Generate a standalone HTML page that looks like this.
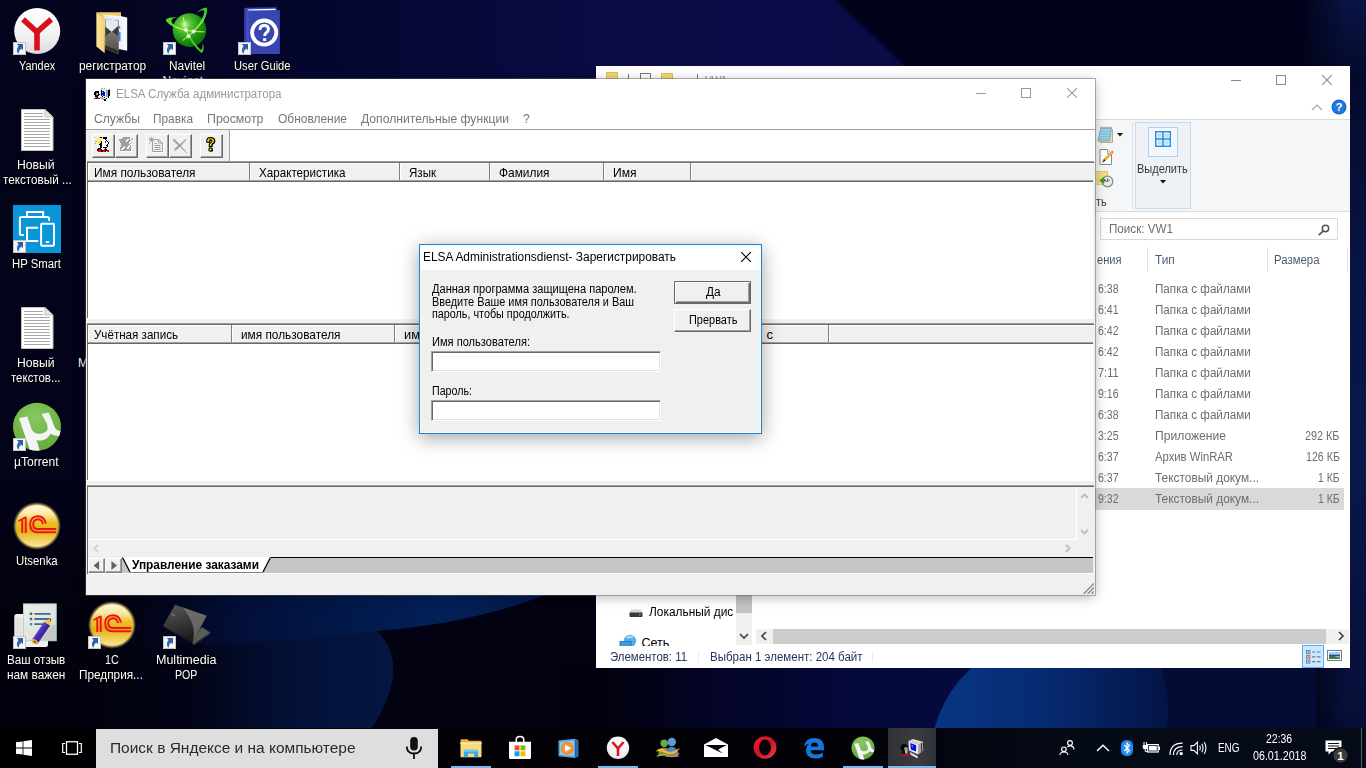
<!DOCTYPE html>
<html>
<head>
<meta charset="utf-8">
<title>Desktop</title>
<style>

*{box-sizing:border-box;margin:0;padding:0}
html,body{width:1366px;height:768px;overflow:hidden}
body{font-family:"Liberation Sans",sans-serif;font-size:12px;color:#000;background:#03031a;position:relative}
.abs{position:absolute}
.t{position:absolute;white-space:nowrap;line-height:1;transform-origin:0 0}
#wall{position:absolute;left:0;top:0;width:1366px;height:768px}
#exp{position:absolute;left:596px;top:66px;width:754px;height:602px;background:#fff;overflow:hidden}
#elsa{position:absolute;left:86px;top:79px;width:1009px;height:516px;background:#f0f0f0;box-shadow:0 0 0 1px rgba(90,90,90,.45),0 2px 11px rgba(0,0,0,.3)}
#dlg{position:absolute;left:419px;top:244px;width:343px;height:190px;background:#f0f0f0;border:1px solid #1883d7;box-shadow:inset 0 0 0 1px #fbf7f2,0 4px 18px rgba(0,0,0,.36)}
#tb{position:absolute;left:0;top:728px;width:1366px;height:40px;background:linear-gradient(90deg,#010104 0%,#020208 60%,#040a16 80%,#050b18 100%)}
.cbtn{position:absolute;width:10px;height:10px}
.tbtn{position:absolute;width:23px;height:24px;background:#f0f0f0;border:1px solid;border-color:#fff #696969 #696969 #fff;box-shadow:inset -1px -1px 0 #a0a0a0}
.hsep{position:absolute;width:2px;height:17px;background:linear-gradient(90deg,#808080 50%,#fff 50%)}

</style>
</head>
<body>
<svg id="wall" viewBox="0 0 1366 768">
<defs>
<linearGradient id="w0" x1="0" x2="0" y1="0" y2="1"><stop offset="0" stop-color="#03031a"/><stop offset=".6" stop-color="#03031a"/><stop offset=".8" stop-color="#02020f"/><stop offset="1" stop-color="#02020f"/></linearGradient>
<linearGradient id="w1" x1="0" x2="1" y1="0" y2="0"><stop offset="0" stop-color="#03031a"/><stop offset=".3" stop-color="#04052a"/><stop offset=".6" stop-color="#090a40"/><stop offset=".85" stop-color="#0d0c4a"/><stop offset="1" stop-color="#0a0a42"/></linearGradient>
<linearGradient id="w2" x1="0" x2="0" y1="0" y2="1"><stop offset="0" stop-color="#0a1444"/><stop offset=".1" stop-color="#050a2c"/><stop offset=".35" stop-color="#081444"/><stop offset=".6" stop-color="#09174a"/><stop offset="1" stop-color="#060d34"/></linearGradient>
<linearGradient id="w3" x1="0" x2="1" y1="0" y2="0"><stop offset="0" stop-color="#083684"/><stop offset=".5" stop-color="#062a70"/><stop offset="1" stop-color="#041446"/></linearGradient>
<linearGradient id="w4" x1="0" x2="1" y1="0" y2="0"><stop offset="0" stop-color="#02020f"/><stop offset=".3" stop-color="#02103a"/><stop offset=".75" stop-color="#032058"/><stop offset="1" stop-color="#021a4a"/></linearGradient>
<linearGradient id="w5" x1="0" x2="1" y1="0" y2="0"><stop offset="0" stop-color="#02020f"/><stop offset=".3" stop-color="#020416"/><stop offset=".7" stop-color="#04123a"/><stop offset="1" stop-color="#051640"/></linearGradient>
<linearGradient id="w6" x1="0" x2="1" y1="0" y2="0"><stop offset="0" stop-color="#02020f"/><stop offset=".06" stop-color="#02020f"/><stop offset=".2" stop-color="#030426"/><stop offset=".38" stop-color="#05083a"/><stop offset=".5" stop-color="#06093c"/><stop offset=".8" stop-color="#040c36"/><stop offset="1" stop-color="#040c34"/></linearGradient>
<linearGradient id="mrg" x1="0" x2="1" y1="0" y2="0"><stop offset="0" stop-color="#000"/><stop offset=".7" stop-color="#fff"/></linearGradient><mask id="mr"><rect x="1300" y="0" width="66" height="768" fill="url(#mrg)"/></mask><filter id="bl" color-interpolation-filters="sRGB" x="-5%" y="-20%" width="110%" height="140%"><feGaussianBlur stdDeviation="1.5"/></filter>
</defs>
<rect width="1366" height="768" fill="#020212"/><rect x="830" y="0" width="536" height="80" fill="#02031a"/>
<rect x="0" y="0" width="120" height="768" fill="url(#w0)"/>
<polygon points="-10,-10 836,-10 836,0 930,90 -10,90" fill="url(#w1)" filter="url(#bl)"/>
<rect x="1300" y="0" width="66" height="768" fill="url(#w2)" mask="url(#mr)"/>
<rect x="560" y="660" width="756" height="70" fill="url(#w6)"/>
<path d="M120,595 L545,595 Q470,624 377,631 Q280,648 120,646 Z" fill="url(#w4)"/>
<path d="M100,646 Q300,644 377,631 Q412,665 372,728 L100,728 Z" fill="url(#w5)"/>
<path d="M934,730 Q945,690 974,666 L1160,666 Q1172,700 1166,730 Z" fill="url(#w3)"/>

</svg>
<div id="desk">
<svg class="abs" style="left:14px;top:7px" width="47" height="47" viewBox="0 0 47 47"><defs><linearGradient id="ydg" x1="0" y1="0" x2="0" y2="1"><stop offset="0" stop-color="#fff"/><stop offset=".6" stop-color="#f2f2f2"/><stop offset="1" stop-color="#d9d9d9"/></linearGradient></defs><circle cx="23.2" cy="24" r="23" fill="url(#ydg)"/><path d="M9 12.4L23 25L37.2 12.4" fill="none" stroke="#d80f18" stroke-width="5.6"/><path d="M23 23.5V43.4" stroke="#d80f18" stroke-width="5.6"/></svg>
<svg class="abs" style="left:13px;top:42px" width="13" height="13" viewBox="0 0 13 13"><rect x=".5" y=".5" width="12" height="12" fill="#f6f6f6" stroke="#c4c4c4" stroke-width="1"/><path d="M3.9 2.1H10V8.2L8.3 6.6Q5.9 8 5.5 11.7Q2 8.4 5.6 3.9Z" fill="#2c5ea8"/><path d="M5.2 10.6Q3.8 8 5.8 5.4" fill="none" stroke="#4f7fc0" stroke-width=".6"/></svg>
<div class="t" style="left:18.7px;top:60px;font-size:12px;color:#fff;font-weight:400;text-shadow:0 1px 2px #000,0 0 3px rgba(0,0,0,.9),1px 1px 1px rgba(0,0,0,.8);transform:scaleX(0.909)">Yandex</div>
<svg class="abs" style="left:95px;top:11px" width="34" height="44" viewBox="0 0 34 44"><defs><linearGradient id="rfg" x1="0" y1="0" x2="1" y2="0"><stop offset="0" stop-color="#fbe59a"/><stop offset="1" stop-color="#f3d26e"/></linearGradient><linearGradient id="rrd" x1="0" y1="0" x2="0" y2="1"><stop offset="0" stop-color="#7c7870"/><stop offset="1" stop-color="#4e4a44"/></linearGradient></defs><path d="M1.4 1.2H26V7L10.1 7.6Z" fill="#f0cd6a"/><path d="M6.3 3.6L26.5 5.3L32.2 6.5V39.8L23.7 38V8.5Z" fill="#f6f7fb"/><path d="M7 4.4L24 7.4V9.6L10.3 8.4Z" fill="#e4ebf3"/><path d="M10.3 8.2L23.4 9.4L23.8 43.2L10.3 37.8Z" fill="#e3e9f0"/><path d="M10.3 15.5L16.6 21L10.3 27Z" fill="#3e3a35"/><path d="M23.5 14.6L16.6 21L23.6 27.5Z" fill="#3e3a35"/><path d="M10.3 25L16.6 20.6L23.6 25.5L23.8 43.2L10.3 37.8Z" fill="url(#rrd)"/><path d="M10.3 34.5L23.75 39.8L23.8 43.2L10.3 37.8Z" fill="#2e2b28"/><rect x="23.7" y="15.2" width="1.6" height="2.4" fill="#3a92ea"/><rect x="23.7" y="20.8" width="1.9" height="9.5" rx=".6" fill="#2f88e6"/><path d="M26.2 8V38.4" stroke="#e4e6ec" stroke-width=".6"/><path d="M1.4 1.2L10.1 7.4L9.7 42.2L1.4 35.6Z" fill="url(#rfg)"/></svg>
<div class="t" style="left:78.8px;top:60px;font-size:12px;color:#fff;font-weight:400;text-shadow:0 1px 2px #000,0 0 3px rgba(0,0,0,.9),1px 1px 1px rgba(0,0,0,.8);transform:scaleX(0.992)">регистратор</div>
<svg class="abs" style="left:164px;top:5px" width="46" height="50" viewBox="0 0 46 50"><defs><radialGradient id="nvg" cx=".36" cy=".34" r=".72"><stop offset="0" stop-color="#d8f5c0"/><stop offset=".22" stop-color="#62c83a"/><stop offset=".6" stop-color="#1f9a14"/><stop offset="1" stop-color="#0d6a0a"/></radialGradient></defs><circle cx="25.5" cy="25.1" r="16.8" fill="url(#nvg)"/><path d="M2.2 14.1Q6 11.6 13.5 12.3Q5.5 13.6 8 18Q13 22 21.5 24.4L21 25.9Q10 23 5 19Q1 16 2.2 14.1Z" fill="#4fe020"/><path d="M32.4 7.9Q38 3 42.6 2.5Q44.2 8 39.9 15.2Q36 21.4 31 25.8L29.9 24.7Q36 18 39.3 11Q41 6 40 5Q37 5 32.4 7.9Z" fill="#45d81c"/><path d="M24.2 31.3Q28 39 33 44Q36 47 37.9 48Q41.2 44 38.4 37.6Q39.2 43 37 45Q32.5 41.5 25.6 30.6Z" fill="#3ccf18"/><path d="M19.3 12.3Q20.5 23 24.6 31.3M39.7 15.2Q31 27 18.6 35.6M10.6 21.8Q24 27 40.5 26.9" fill="none" stroke="#e4ff6a" stroke-width=".9"/><circle cx="21.9" cy="25.1" r="2.2" fill="#fff" opacity=".55"/><circle cx="29.5" cy="26.5" r="2.2" fill="#fff" opacity=".55"/><circle cx="24.6" cy="31.3" r="2.2" fill="#fff" opacity=".55"/><circle cx="21.9" cy="25.1" r="1.2" fill="#fff"/><circle cx="29.5" cy="26.5" r="1.2" fill="#fff"/><circle cx="24.6" cy="31.3" r="1.2" fill="#fff"/></svg>
<svg class="abs" style="left:163px;top:42px" width="13" height="13" viewBox="0 0 13 13"><rect x=".5" y=".5" width="12" height="12" fill="#f6f6f6" stroke="#c4c4c4" stroke-width="1"/><path d="M3.9 2.1H10V8.2L8.3 6.6Q5.9 8 5.5 11.7Q2 8.4 5.6 3.9Z" fill="#2c5ea8"/><path d="M5.2 10.6Q3.8 8 5.8 5.4" fill="none" stroke="#4f7fc0" stroke-width=".6"/></svg>
<div class="t" style="left:168.7px;top:60px;font-size:12px;color:#fff;font-weight:400;text-shadow:0 1px 2px #000,0 0 3px rgba(0,0,0,.9),1px 1px 1px rgba(0,0,0,.8);transform:scaleX(0.987)">Navitel</div>
<div class="abs" style="left:150px;top:74px;width:80px;height:5px;overflow:hidden"><div class="t" style="left:12.5px;top:1px;font-size:12px;color:#fff">Navigat...</div></div>
<svg class="abs" style="left:243px;top:6px" width="38" height="49" viewBox="0 0 38 49"><path d="M1.2 3.2Q1.2 1.7 2.8 1.7L33.7 1.3V4.2L36.7 4.3V48.1H1.2Z" fill="#3544ae"/><path d="M5.8 5L36.7 4.3V48.1H5.8Z" fill="#3746b2"/><path d="M1.2 3.4L5.8 5V48.1H1.2Z" fill="#2f3da2"/><path d="M3.6 4.4L5.8 5V48.1H3.6Z" fill="#4355c8"/><path d="M4 3.5L32.6 2.7V4.1L5.6 4.6Z" fill="#fff"/><circle cx="21.2" cy="26.6" r="12.1" fill="none" stroke="#fff" stroke-width="3.8"/><path d="M17 24Q17 19.6 21.3 19.6Q25.4 19.6 25.4 23.2Q25.4 25.4 23.2 26.8Q21.7 27.8 21.7 30" fill="none" stroke="#fff" stroke-width="3"/><rect x="20.1" y="32.2" width="3.1" height="2.8" fill="#fff"/></svg>
<svg class="abs" style="left:238px;top:42px" width="13" height="13" viewBox="0 0 13 13"><rect x=".5" y=".5" width="12" height="12" fill="#f6f6f6" stroke="#c4c4c4" stroke-width="1"/><path d="M3.9 2.1H10V8.2L8.3 6.6Q5.9 8 5.5 11.7Q2 8.4 5.6 3.9Z" fill="#2c5ea8"/><path d="M5.2 10.6Q3.8 8 5.8 5.4" fill="none" stroke="#4f7fc0" stroke-width=".6"/></svg>
<div class="t" style="left:233.7px;top:60px;font-size:12px;color:#fff;font-weight:400;text-shadow:0 1px 2px #000,0 0 3px rgba(0,0,0,.9),1px 1px 1px rgba(0,0,0,.8);transform:scaleX(0.932)">User Guide</div>
<svg class="abs" style="left:21px;top:109px" width="33" height="43" viewBox="0 0 33 43"><path d="M.5 .5H23.8L32 8V41.5H.5Z" fill="#fff" stroke="#c4c4c4" stroke-width="1"/><path d="M3 4.5H22" stroke="#a6a6a6" stroke-width="1"/><path d="M3 7.5H22" stroke="#a6a6a6" stroke-width="1"/><path d="M3 10.5H28.8" stroke="#a6a6a6" stroke-width="1"/><path d="M3 13.5H28.8" stroke="#a6a6a6" stroke-width="1"/><path d="M3 16.5H28.8" stroke="#a6a6a6" stroke-width="1"/><path d="M3 19.5H28.8" stroke="#a6a6a6" stroke-width="1"/><path d="M3 22.5H28.8" stroke="#a6a6a6" stroke-width="1"/><path d="M3 25.5H28.8" stroke="#a6a6a6" stroke-width="1"/><path d="M3 28.5H28.8" stroke="#a6a6a6" stroke-width="1"/><path d="M3 31.5H28.8" stroke="#a6a6a6" stroke-width="1"/><path d="M3 34.5H28.8" stroke="#a6a6a6" stroke-width="1"/><path d="M3 37.5H28.8" stroke="#a6a6a6" stroke-width="1"/><path d="M23.8 .5V8H32Z" fill="#e4e4e4" stroke="#bcbcbc" stroke-width=".8"/></svg>
<div class="t" style="left:17.3px;top:159px;font-size:12px;color:#fff;font-weight:400;text-shadow:0 1px 2px #000,0 0 3px rgba(0,0,0,.9),1px 1px 1px rgba(0,0,0,.8);transform:scaleX(1.015)">Новый</div>
<div class="t" style="left:2.5px;top:174px;font-size:12px;color:#fff;font-weight:400;text-shadow:0 1px 2px #000,0 0 3px rgba(0,0,0,.9),1px 1px 1px rgba(0,0,0,.8);transform:scaleX(0.974)">текстовый ...</div>
<svg class="abs" style="left:21px;top:307px" width="33" height="43" viewBox="0 0 33 43"><path d="M.5 .5H23.8L32 8V41.5H.5Z" fill="#fff" stroke="#c4c4c4" stroke-width="1"/><path d="M3 4.5H22" stroke="#a6a6a6" stroke-width="1"/><path d="M3 7.5H22" stroke="#a6a6a6" stroke-width="1"/><path d="M3 10.5H28.8" stroke="#a6a6a6" stroke-width="1"/><path d="M3 13.5H28.8" stroke="#a6a6a6" stroke-width="1"/><path d="M3 16.5H28.8" stroke="#a6a6a6" stroke-width="1"/><path d="M3 19.5H28.8" stroke="#a6a6a6" stroke-width="1"/><path d="M3 22.5H28.8" stroke="#a6a6a6" stroke-width="1"/><path d="M3 25.5H28.8" stroke="#a6a6a6" stroke-width="1"/><path d="M3 28.5H28.8" stroke="#a6a6a6" stroke-width="1"/><path d="M3 31.5H28.8" stroke="#a6a6a6" stroke-width="1"/><path d="M3 34.5H28.8" stroke="#a6a6a6" stroke-width="1"/><path d="M3 37.5H28.8" stroke="#a6a6a6" stroke-width="1"/><path d="M23.8 .5V8H32Z" fill="#e4e4e4" stroke="#bcbcbc" stroke-width=".8"/></svg>
<div class="t" style="left:17.3px;top:357px;font-size:12px;color:#fff;font-weight:400;text-shadow:0 1px 2px #000,0 0 3px rgba(0,0,0,.9),1px 1px 1px rgba(0,0,0,.8);transform:scaleX(1.015)">Новый</div>
<div class="t" style="left:11.1px;top:372px;font-size:12px;color:#fff;font-weight:400;text-shadow:0 1px 2px #000,0 0 3px rgba(0,0,0,.9),1px 1px 1px rgba(0,0,0,.8);transform:scaleX(0.955)">текстов...</div>
<div class="t" style="left:77.9px;top:357px;font-size:12px;color:#fff;font-weight:400;text-shadow:0 1px 2px #000,0 0 3px rgba(0,0,0,.9),1px 1px 1px rgba(0,0,0,.8);">М</div>
<svg class="abs" style="left:13px;top:205px" width="48" height="48" viewBox="0 0 48 48"><rect width="48" height="48" fill="#0996d8"/><g fill="none" stroke="#fff" stroke-width="2"><path d="M14 11.4V7H30.1V11.4"/><path d="M36 15.8V13.4Q36 11.9 34.5 11.9H8.4Q6.9 11.9 6.9 13.4V28.4Q6.9 29.9 8.4 29.9H10.9"/><path d="M25.2 22.8H14V35.9H25.2"/><rect x="28.1" y="18.7" width="12.9" height="22.1" rx="1"/></g><rect x="32.8" y="36" width="3.4" height="2" fill="#fff"/></svg>
<svg class="abs" style="left:13px;top:240px" width="13" height="13" viewBox="0 0 13 13"><rect x=".5" y=".5" width="12" height="12" fill="#f6f6f6" stroke="#c4c4c4" stroke-width="1"/><path d="M3.9 2.1H10V8.2L8.3 6.6Q5.9 8 5.5 11.7Q2 8.4 5.6 3.9Z" fill="#2c5ea8"/><path d="M5.2 10.6Q3.8 8 5.8 5.4" fill="none" stroke="#4f7fc0" stroke-width=".6"/></svg>
<div class="t" style="left:12.4px;top:258px;font-size:12px;color:#fff;font-weight:400;text-shadow:0 1px 2px #000,0 0 3px rgba(0,0,0,.9),1px 1px 1px rgba(0,0,0,.8);transform:scaleX(0.944)">HP Smart</div>
<svg class="abs" style="left:12px;top:402px" width="50" height="50" viewBox="0 0 50 50"><defs><radialGradient id="utg" cx=".45" cy=".3" r=".75"><stop offset="0" stop-color="#88c862"/><stop offset=".6" stop-color="#6fb747"/><stop offset="1" stop-color="#62aa3c"/></radialGradient><clipPath id="utc"><circle cx="25" cy="24.8" r="24"/></clipPath></defs><circle cx="25" cy="24.8" r="24" fill="url(#utg)"/><path clip-path="url(#utc)" d="M6.9 16.1L15.3 14.6L19.6 27Q22 32.5 28.1 31.7Q34 30.8 35.4 27.4Q36 25 34.5 21L29.6 12L36.8 10.6L42.7 25.2Q44.5 29 50 29.2L49 33.8Q42 34.5 38.5 31.8Q36 37.5 29 38.5Q26.5 38.8 24.6 38L28.2 50L18.5 50Z" fill="#f4f4f4"/></svg>
<svg class="abs" style="left:13px;top:438px" width="13" height="13" viewBox="0 0 13 13"><rect x=".5" y=".5" width="12" height="12" fill="#f6f6f6" stroke="#c4c4c4" stroke-width="1"/><path d="M3.9 2.1H10V8.2L8.3 6.6Q5.9 8 5.5 11.7Q2 8.4 5.6 3.9Z" fill="#2c5ea8"/><path d="M5.2 10.6Q3.8 8 5.8 5.4" fill="none" stroke="#4f7fc0" stroke-width=".6"/></svg>
<div class="t" style="left:14.3px;top:456px;font-size:12px;color:#fff;font-weight:400;text-shadow:0 1px 2px #000,0 0 3px rgba(0,0,0,.9),1px 1px 1px rgba(0,0,0,.8);transform:scaleX(1.008)">µTorrent</div>
<svg class="abs" style="left:11px;top:500px" width="52" height="52" viewBox="0 0 52 52"><defs><linearGradient id="c1a" x1="0" y1="0" x2="0" y2="1"><stop offset="0" stop-color="#fffce8"/><stop offset=".22" stop-color="#fbe9a0"/><stop offset=".42" stop-color="#eec02c"/><stop offset=".6" stop-color="#e4b018"/><stop offset=".8" stop-color="#f0cc50"/><stop offset="1" stop-color="#fae8a8"/></linearGradient><radialGradient id="c1ag" cx=".5" cy=".5" r=".5"><stop offset=".84" stop-color="#fff4c0" stop-opacity=".85"/><stop offset="1" stop-color="#ffe680" stop-opacity="0"/></radialGradient></defs><circle cx="26" cy="25.9" r="24" fill="url(#c1ag)"/><circle cx="26" cy="25.9" r="21.2" fill="url(#c1a)" stroke="#d8a010" stroke-width=".6"/><path d="M7.3 20.2L13.7 16.7H15.7V33H13.7V18.7L12.2 19.5V33H10.3V20.5L7.3 22.1Z" fill="#ee1414"/><g fill="none" stroke="#ee1414" stroke-width="1.9"><path d="M34.9 23.6Q33.4 16.2 26.9 16.2Q19.2 16.4 19.2 24.6Q19.5 32.3 26.4 32.3H45.2"/><path d="M32 24Q31 19.3 26.9 19.3Q22.2 19.5 22.2 24.6Q22.4 29 26.8 29H45.2"/></g></svg>
<div class="t" style="left:16.1px;top:555px;font-size:12px;color:#fff;font-weight:400;text-shadow:0 1px 2px #000,0 0 3px rgba(0,0,0,.9),1px 1px 1px rgba(0,0,0,.8);transform:scaleX(0.947)">Utsenka</div>
<svg class="abs" style="left:86px;top:599px" width="52" height="52" viewBox="0 0 52 52"><defs><linearGradient id="c1b" x1="0" y1="0" x2="0" y2="1"><stop offset="0" stop-color="#fffce8"/><stop offset=".22" stop-color="#fbe9a0"/><stop offset=".42" stop-color="#eec02c"/><stop offset=".6" stop-color="#e4b018"/><stop offset=".8" stop-color="#f0cc50"/><stop offset="1" stop-color="#fae8a8"/></linearGradient><radialGradient id="c1bg" cx=".5" cy=".5" r=".5"><stop offset=".84" stop-color="#fff4c0" stop-opacity=".85"/><stop offset="1" stop-color="#ffe680" stop-opacity="0"/></radialGradient></defs><circle cx="26" cy="25.9" r="24" fill="url(#c1bg)"/><circle cx="26" cy="25.9" r="21.2" fill="url(#c1b)" stroke="#d8a010" stroke-width=".6"/><path d="M7.3 20.2L13.7 16.7H15.7V33H13.7V18.7L12.2 19.5V33H10.3V20.5L7.3 22.1Z" fill="#ee1414"/><g fill="none" stroke="#ee1414" stroke-width="1.9"><path d="M34.9 23.6Q33.4 16.2 26.9 16.2Q19.2 16.4 19.2 24.6Q19.5 32.3 26.4 32.3H45.2"/><path d="M32 24Q31 19.3 26.9 19.3Q22.2 19.5 22.2 24.6Q22.4 29 26.8 29H45.2"/></g></svg>
<svg class="abs" style="left:88px;top:636px" width="13" height="13" viewBox="0 0 13 13"><rect x=".5" y=".5" width="12" height="12" fill="#f6f6f6" stroke="#c4c4c4" stroke-width="1"/><path d="M3.9 2.1H10V8.2L8.3 6.6Q5.9 8 5.5 11.7Q2 8.4 5.6 3.9Z" fill="#2c5ea8"/><path d="M5.2 10.6Q3.8 8 5.8 5.4" fill="none" stroke="#4f7fc0" stroke-width=".6"/></svg>
<div class="t" style="left:104.7px;top:654px;font-size:12px;color:#fff;font-weight:400;text-shadow:0 1px 2px #000,0 0 3px rgba(0,0,0,.9),1px 1px 1px rgba(0,0,0,.8);transform:scaleX(0.899)">1С</div>
<div class="t" style="left:79.4px;top:669px;font-size:12px;color:#fff;font-weight:400;text-shadow:0 1px 2px #000,0 0 3px rgba(0,0,0,.9),1px 1px 1px rgba(0,0,0,.8);transform:scaleX(0.982)">Предприя...</div>
<svg class="abs" style="left:13px;top:602px" width="45" height="48" viewBox="0 0 45 48"><defs><linearGradient id="fbg" x1="0" y1="0" x2="1" y2="1"><stop offset="0" stop-color="#eeeeea"/><stop offset=".6" stop-color="#e2e4e0"/><stop offset="1" stop-color="#d2d5d0"/></linearGradient></defs><rect x="1.3" y="12" width="33.7" height="33" rx="2.5" fill="#f1f1ef"/><path d="M2.5 16Q6 14 9.5 16V40H2.5Z" fill="#dcdcd8" opacity=".7"/><rect x="10.5" y="1.9" width="32.7" height="36.8" fill="url(#fbg)" stroke="#a9d9d0" stroke-width="1"/><rect x="16.8" y="10.6" width="2.4" height="2.4" fill="#3a6a8a"/><rect x="16.8" y="15.8" width="2.4" height="2.4" fill="#3a6a8a"/><rect x="16.8" y="21" width="2.4" height="2.4" fill="#5a8aa6"/><path d="M21.3 11.8H37.6M21.3 17H37.6M21.3 22.2H30" stroke="#3e6f8e" stroke-width="1.8"/><path d="M38 24L42.5 22V38H28Z" fill="#b9bcb8" opacity=".6"/><path d="M18.9 37.9L24.5 41.7L37 23.5L31.4 19.7Z" fill="#5336be"/><path d="M21 39.3L24.5 41.7L37 23.5L34.4 21.7Z" fill="#43289e"/><path d="M31.4 19.7L37 23.5L38.2 16Z" fill="#f3c63e"/><path d="M36.6 18.6L38.2 16L37.9 19.4Z" fill="#444"/><ellipse cx="21.7" cy="39.8" rx="3.5" ry="2.2" transform="rotate(34 21.7 39.8)" fill="#f2c030"/><ellipse cx="21.7" cy="39.8" rx="1.6" ry=".9" transform="rotate(34 21.7 39.8)" fill="#6a5420"/></svg>
<svg class="abs" style="left:13px;top:636px" width="13" height="13" viewBox="0 0 13 13"><rect x=".5" y=".5" width="12" height="12" fill="#f6f6f6" stroke="#c4c4c4" stroke-width="1"/><path d="M3.9 2.1H10V8.2L8.3 6.6Q5.9 8 5.5 11.7Q2 8.4 5.6 3.9Z" fill="#2c5ea8"/><path d="M5.2 10.6Q3.8 8 5.8 5.4" fill="none" stroke="#4f7fc0" stroke-width=".6"/></svg>
<div class="t" style="left:7.3px;top:654px;font-size:12px;color:#fff;font-weight:400;text-shadow:0 1px 2px #000,0 0 3px rgba(0,0,0,.9),1px 1px 1px rgba(0,0,0,.8);transform:scaleX(0.971)">Ваш отзыв</div>
<div class="t" style="left:7.3px;top:669px;font-size:12px;color:#fff;font-weight:400;text-shadow:0 1px 2px #000,0 0 3px rgba(0,0,0,.9),1px 1px 1px rgba(0,0,0,.8);transform:scaleX(0.986)">нам важен</div>
<svg class="abs" style="left:161px;top:603px" width="52" height="43" viewBox="0 0 52 43"><defs><linearGradient id="lpg" x1=".3" y1="0" x2=".6" y2="1"><stop offset="0" stop-color="#545454"/><stop offset=".5" stop-color="#353535"/><stop offset="1" stop-color="#141414"/></linearGradient></defs><path d="M38.5 26.5L41 24.3L49.2 29.6L49 31L33 42L31.1 40.3Z" fill="#5c5c5c"/><path d="M49.2 29.6L49 31L33 42L32.4 41Z" fill="#2a2a2a"/><path d="M14 1.7L45.6 12.8L31.1 40.3L2 23.2Z" fill="url(#lpg)"/><path d="M21.5 4.3L45.6 12.8L31.1 40.3Q37.5 24 21.5 4.3Z" fill="#767676" opacity=".8"/><path d="M2 23.2L31.1 40.3L32.4 41.4L2.2 24.5Z" fill="#0c0c0c"/><path d="M10.5 11L14 12.6" stroke="#9a9a9a" stroke-width=".8"/></svg>
<svg class="abs" style="left:163px;top:636px" width="13" height="13" viewBox="0 0 13 13"><rect x=".5" y=".5" width="12" height="12" fill="#f6f6f6" stroke="#c4c4c4" stroke-width="1"/><path d="M3.9 2.1H10V8.2L8.3 6.6Q5.9 8 5.5 11.7Q2 8.4 5.6 3.9Z" fill="#2c5ea8"/><path d="M5.2 10.6Q3.8 8 5.8 5.4" fill="none" stroke="#4f7fc0" stroke-width=".6"/></svg>
<div class="t" style="left:156.3px;top:654px;font-size:12px;color:#fff;font-weight:400;text-shadow:0 1px 2px #000,0 0 3px rgba(0,0,0,.9),1px 1px 1px rgba(0,0,0,.8);transform:scaleX(1.041)">Multimedia</div>
<div class="t" style="left:175.0px;top:669px;font-size:12px;color:#fff;font-weight:400;text-shadow:0 1px 2px #000,0 0 3px rgba(0,0,0,.9),1px 1px 1px rgba(0,0,0,.8);transform:scaleX(0.884)">POP</div>
</div>
<div id="exp">
<div class="abs" style="left:10px;top:6px;width:12px;height:10px;background:#f4d67a;border:1px solid #e6bf4c"></div>
<div class="abs" style="left:32px;top:8px;width:1px;height:8px;background:#777"></div>
<div class="abs" style="left:44px;top:7px;width:11px;height:10px;background:#fff;border:1px solid #777"></div>
<div class="abs" style="left:65px;top:7px;width:12px;height:10px;background:#f4d67a;border:1px solid #e6bf4c"></div>
<div class="abs" style="left:101px;top:8px;width:1px;height:8px;background:#777"></div>
<div class="t" style="left:109.0px;top:9px;font-size:12px;color:#999;font-weight:400;transform:scaleX(0.846)">VW1</div>
<svg class="abs" style="left:635px;top:9px" width="10" height="10" viewBox="0 0 10 10"><path d="M0 5.5H10" stroke="#8a8a8a" stroke-width="1"/></svg>
<svg class="abs" style="left:680px;top:9px" width="10" height="10" viewBox="0 0 10 10"><rect x=".5" y=".5" width="9" height="9" fill="none" stroke="#8a8a8a" stroke-width="1"/></svg>
<svg class="abs" style="left:726px;top:9px" width="10" height="10" viewBox="0 0 10 10"><path d="M0 0L10 10M10 0L0 10" stroke="#8a8a8a" stroke-width="1.1"/></svg>
<svg class="abs" style="left:715px;top:37px" width="12" height="8" viewBox="0 0 12 8"><path d="M1 7L6 2L11 7" fill="none" stroke="#a6a6a6" stroke-width="1.2"/></svg>
<svg class="abs" style="left:735px;top:33px" width="16" height="16" viewBox="0 0 16 16"><circle cx="8" cy="8" r="7.5" fill="#1068c8"/><circle cx="8" cy="8" r="6.3" fill="#1e7ae0"/><text x="8" y="12.2" font-family="Liberation Sans" font-weight="700" font-size="11.5" fill="#fff" text-anchor="middle">?</text></svg>
<div class="abs" style="left:0px;top:53px;width:754px;height:1px;background:#dadbdc"></div>
<div class="abs" style="left:0px;top:54px;width:754px;height:91px;background:#f5f6f7"></div>
<div class="abs" style="left:0px;top:145px;width:754px;height:1px;background:#dadbdc"></div>
<svg class="abs" style="left:501px;top:60px" width="17" height="18" viewBox="0 0 17 18"><path d="M4 3.5H15.5V16.5H3.5Z" fill="#e8dcb8" stroke="#a89a70" stroke-width=".8"/><path d="M3.5 2.5H14.5L12.5 15H1Z" fill="#9fd0e6" stroke="#6aa3bd" stroke-width=".8"/><path d="M3 5.5H13.5M2.6 8H13.1M2.2 10.5H12.7M1.8 13H12.3" stroke="#7bb6d0" stroke-width=".7"/><path d="M4 2V0.8M6 2V0.8M8 2V0.8M10 2V0.8M12 2V0.8M14 2V0.8" stroke="#555" stroke-width=".8"/></svg>
<svg class="abs" style="left:521px;top:67px" width="6" height="4" viewBox="0 0 6 4"><path d="M0 0H6L3 3.5Z" fill="#111"/></svg>
<svg class="abs" style="left:503px;top:82px" width="15" height="18" viewBox="0 0 15 18"><path d="M1 1.5H8.5L12.5 5.5V16.5H1Z" fill="#fff" stroke="#8a8a8a" stroke-width="1"/><path d="M8.5 1.5V5.5H12.5" fill="#eee" stroke="#8a8a8a" stroke-width=".8"/><path d="M3.5 14.5L5 11L12.5 3.5L14 5L6.5 12.5Z" fill="#f5b733" stroke="#c88a1a" stroke-width=".6"/><path d="M12.5 3.5L13.3 2.6L14.8 4.1L14 5Z" fill="#ee6a7a"/><path d="M3.5 14.5L5 11L6.5 12.5Z" fill="#333"/></svg>
<svg class="abs" style="left:500px;top:104px" width="18" height="18" viewBox="0 0 18 18"><rect x="1" y="1.5" width="10.5" height="13" fill="#f6da7e" stroke="#e3bd4a" stroke-width=".8"/><circle cx="11.5" cy="11.5" r="5.3" fill="#ececec" stroke="#8a8a8a" stroke-width="1.3"/><path d="M11.5 8.2V11.5L14 10" fill="none" stroke="#555" stroke-width=".9"/><path d="M3.5 10.5L8 7.5V9.3Q10 9.3 10.5 11.5Q9.5 11 8 11.3V13.3Z" fill="#28a838" stroke="#14802a" stroke-width=".5"/></svg>
<div class="t" style="left:500.0px;top:130px;font-size:12px;color:#444;font-weight:400;transform:scaleX(0.894)">ть</div>
<div class="abs" style="left:536px;top:56px;width:1px;height:87px;background:#e2e3e4"></div>
<div class="abs" style="left:539px;top:56px;width:56px;height:87px;background:#eef2f7;border:1px solid #c2dcf2"></div>
<div class="abs" style="left:552px;top:61px;width:30px;height:30px;background:#f4f8fc;border:1px solid #a9d1f5"></div>
<svg class="abs" style="left:559px;top:65px" width="16" height="16" viewBox="0 0 16 16"><rect x=".75" y=".75" width="14.5" height="14.5" fill="#bcdef7" stroke="#2f8fe0" stroke-width="1.5"/><path d="M8 0V16M0 8H16" stroke="#2f8fe0" stroke-width="1.6"/><path d="M2 2H6.6V6.6H2ZM9.4 2H14V6.6H9.4ZM2 9.4H6.6V14H2ZM9.4 9.4H14V14H9.4Z" fill="none" stroke="#e6f3fd" stroke-width=".8"/></svg>
<div class="t" style="left:541.3px;top:97px;font-size:12px;color:#3a3a3a;font-weight:400;transform:scaleX(0.916)">Выделить</div>
<svg class="abs" style="left:564px;top:114px" width="6" height="4" viewBox="0 0 6 4"><path d="M0 0H6L3 3.5Z" fill="#111"/></svg>
<div class="abs" style="left:504px;top:152px;width:238px;height:22px;background:#fff;border:1px solid #d9d9d9"></div>
<div class="t" style="left:513.4px;top:157px;font-size:12px;color:#6d6d6d;font-weight:400;transform:scaleX(0.971)">Поиск: VW1</div>
<svg class="abs" style="left:722px;top:158px" width="12" height="12" viewBox="0 0 12 12"><circle cx="7.5" cy="4.5" r="3.2" fill="none" stroke="#555" stroke-width="1.5"/><path d="M5.2 6.8L0.8 11.2" stroke="#555" stroke-width="1.7"/></svg>
<div class="t" style="left:501.0px;top:188px;font-size:12px;color:#4c607a;font-weight:400;transform:scaleX(0.928)">ения</div>
<div class="t" style="left:558.8px;top:188px;font-size:12px;color:#4c607a;font-weight:400;transform:scaleX(0.989)">Тип</div>
<div class="t" style="left:678.2px;top:188px;font-size:12px;color:#4c607a;font-weight:400;transform:scaleX(0.949)">Размера</div>
<div class="abs" style="left:551px;top:181px;width:1px;height:25px;background:#e5e5e5"></div>
<div class="abs" style="left:671px;top:181px;width:1px;height:25px;background:#e5e5e5"></div>
<div class="abs" style="left:751px;top:181px;width:1px;height:25px;background:#e5e5e5"></div>
<div class="abs" style="left:499px;top:422px;width:249px;height:22px;background:#d9d9d9"></div>
<div class="t" style="left:501.5px;top:217px;font-size:12px;color:#6d6d6d;font-weight:400;transform:scaleX(0.878)">6:38</div>
<div class="t" style="left:558.8px;top:217px;font-size:12px;color:#6d6d6d;font-weight:400;transform:scaleX(0.971)">Папка с файлами</div>
<div class="t" style="left:501.5px;top:238px;font-size:12px;color:#6d6d6d;font-weight:400;transform:scaleX(0.878)">6:41</div>
<div class="t" style="left:558.8px;top:238px;font-size:12px;color:#6d6d6d;font-weight:400;transform:scaleX(0.971)">Папка с файлами</div>
<div class="t" style="left:501.5px;top:259px;font-size:12px;color:#6d6d6d;font-weight:400;transform:scaleX(0.878)">6:42</div>
<div class="t" style="left:558.8px;top:259px;font-size:12px;color:#6d6d6d;font-weight:400;transform:scaleX(0.971)">Папка с файлами</div>
<div class="t" style="left:501.5px;top:280px;font-size:12px;color:#6d6d6d;font-weight:400;transform:scaleX(0.878)">6:42</div>
<div class="t" style="left:558.8px;top:280px;font-size:12px;color:#6d6d6d;font-weight:400;transform:scaleX(0.971)">Папка с файлами</div>
<div class="t" style="left:501.5px;top:301px;font-size:12px;color:#6d6d6d;font-weight:400;transform:scaleX(0.912)">7:11</div>
<div class="t" style="left:558.8px;top:301px;font-size:12px;color:#6d6d6d;font-weight:400;transform:scaleX(0.971)">Папка с файлами</div>
<div class="t" style="left:501.5px;top:322px;font-size:12px;color:#6d6d6d;font-weight:400;transform:scaleX(0.878)">9:16</div>
<div class="t" style="left:558.8px;top:322px;font-size:12px;color:#6d6d6d;font-weight:400;transform:scaleX(0.971)">Папка с файлами</div>
<div class="t" style="left:501.5px;top:343px;font-size:12px;color:#6d6d6d;font-weight:400;transform:scaleX(0.878)">6:38</div>
<div class="t" style="left:558.8px;top:343px;font-size:12px;color:#6d6d6d;font-weight:400;transform:scaleX(0.971)">Папка с файлами</div>
<div class="t" style="left:501.5px;top:364px;font-size:12px;color:#6d6d6d;font-weight:400;transform:scaleX(0.878)">3:25</div>
<div class="t" style="left:558.8px;top:364px;font-size:12px;color:#6d6d6d;font-weight:400;transform:scaleX(1.009)">Приложение</div>
<div class="t" style="left:709.0px;top:364px;font-size:12px;color:#6d6d6d;font-weight:400;transform:scaleX(0.902)">292 КБ</div>
<div class="t" style="left:501.5px;top:385px;font-size:12px;color:#6d6d6d;font-weight:400;transform:scaleX(0.878)">6:37</div>
<div class="t" style="left:558.8px;top:385px;font-size:12px;color:#6d6d6d;font-weight:400;transform:scaleX(0.940)">Архив WinRAR</div>
<div class="t" style="left:709.5px;top:385px;font-size:12px;color:#6d6d6d;font-weight:400;transform:scaleX(0.889)">126 КБ</div>
<div class="t" style="left:501.5px;top:406px;font-size:12px;color:#6d6d6d;font-weight:400;transform:scaleX(0.878)">6:37</div>
<div class="t" style="left:558.8px;top:406px;font-size:12px;color:#6d6d6d;font-weight:400;transform:scaleX(0.991)">Текстовый докум...</div>
<div class="t" style="left:722.0px;top:406px;font-size:12px;color:#6d6d6d;font-weight:400;transform:scaleX(0.864)">1 КБ</div>
<div class="t" style="left:501.5px;top:427px;font-size:12px;color:#6d6d6d;font-weight:400;transform:scaleX(0.878)">9:32</div>
<div class="t" style="left:558.8px;top:427px;font-size:12px;color:#6d6d6d;font-weight:400;transform:scaleX(0.991)">Текстовый докум...</div>
<div class="t" style="left:722.0px;top:427px;font-size:12px;color:#6d6d6d;font-weight:400;transform:scaleX(0.864)">1 КБ</div>
<svg class="abs" style="left:33px;top:542px" width="14" height="10" viewBox="0 0 14 10"><path d="M1.5 2.5Q1.5 1.5 2.5 1.5H11.5Q12.5 1.5 12.5 2.5L13.5 5H0.5Z" fill="#d8d8d8"/><rect x="0.5" y="4.5" width="13" height="4.5" rx=".8" fill="#3a3a3a"/><rect x="10" y="6" width="1.6" height="1.3" fill="#35d04a"/></svg>
<div class="t" style="left:53.4px;top:540px;font-size:12.5px;color:#000;font-weight:400;transform:scaleX(0.952)">Локальный дис</div>
<svg class="abs" style="left:23px;top:568px" width="18" height="12" viewBox="0 0 18 12"><circle cx="11" cy="7" r="6.2" fill="#5aaee6"/><path d="M7 3Q11 0 15 3Q13 5 11 4Q9 6 7 3Z" fill="#a6d8f5"/><rect x="1" y="7.5" width="11" height="5" fill="#3d9be0" stroke="#1b6fb8" stroke-width=".8"/></svg>
<div class="abs" style="left:45px;top:568px;width:40px;height:12px;overflow:hidden"><div class="t" style="left:.5px;top:3.2px;font-size:12.5px;color:#000">Сеть</div></div>
<div class="abs" style="left:140px;top:524px;width:16px;height:55px;background:#f0f0f0"></div>
<div class="abs" style="left:140px;top:524px;width:16px;height:23px;background:#c1c1c1"></div>
<svg class="abs" style="left:143px;top:567px" width="10" height="7" viewBox="0 0 10 7"><path d="M1 1L5 5L9 1" fill="none" stroke="#444" stroke-width="1.7"/></svg>
<div class="abs" style="left:160px;top:563px;width:593px;height:15px;background:#f0f0f0"></div>
<div class="abs" style="left:177px;top:563px;width:553px;height:15px;background:#cdcdcd"></div>
<svg class="abs" style="left:164px;top:565px" width="7" height="10" viewBox="0 0 7 10"><path d="M6 1L2 5L6 9" fill="none" stroke="#444" stroke-width="1.7"/></svg>
<svg class="abs" style="left:742px;top:565px" width="7" height="10" viewBox="0 0 7 10"><path d="M1 1L5 5L1 9" fill="none" stroke="#444" stroke-width="1.7"/></svg>
<div class="t" style="left:14.2px;top:585px;font-size:12px;color:#26365e;font-weight:400;transform:scaleX(0.951)">Элементов: 11</div>
<div class="abs" style="left:102px;top:585px;width:1px;height:11px;background:#ebebeb"></div>
<div class="t" style="left:113.6px;top:585px;font-size:12px;color:#26365e;font-weight:400;transform:scaleX(0.960)">Выбран 1 элемент: 204 байт</div>
<div class="abs" style="left:276px;top:585px;width:1px;height:11px;background:#ebebeb"></div>
<div class="abs" style="left:706px;top:579px;width:22px;height:23px;background:#cce8ff;border:1px solid #59b0ee"></div>
<svg class="abs" style="left:710px;top:584px" width="15" height="14" viewBox="0 0 15 14"><g fill="none" stroke="#7a7a7a" stroke-width=".9"><rect x=".5" y=".5" width="3.4" height="3"/><rect x=".5" y="5.3" width="3.4" height="3"/><rect x=".5" y="10.1" width="3.4" height="3"/></g><rect x="1.6" y="1.5" width="1.3" height="1.1" fill="#3b78d8"/><rect x="1.6" y="6.3" width="1.3" height="1.1" fill="#d84a3b"/><rect x="1.6" y="11.1" width="1.3" height="1.1" fill="#d84a3b"/><path d="M6 2H9.5M11 2H14.5M6 6.8H9.5M11 6.8H14.5M6 11.6H9.5M11 11.6H14.5" stroke="#6a7a8a" stroke-width="1.2"/></svg>
<svg class="abs" style="left:731px;top:584px" width="15" height="12" viewBox="0 0 15 12"><rect x=".5" y=".5" width="14" height="10" fill="#fff" stroke="#7a7a7a" stroke-width="1"/><rect x="2" y="2" width="11" height="7" fill="#9fd0f0"/><path d="M2 9V6.5Q5 4.5 8 6.5T13 7V9Z" fill="#3b7a3a"/><path d="M2 5.5H13" stroke="#2a4a8a" stroke-width="1.6"/></svg>
</div>
<div id="elsa">
<div class="abs" style="left:0px;top:0px;width:1009px;height:50px;background:#fff"></div>
<svg class="abs" style="left:7px;top:8px" width="17" height="14" viewBox="0 0 17 14" shape-rendering="crispEdges"><rect x="8" y="1" width="2" height="1" fill="#a8a8a8"/><rect x="11" y="1" width="1" height="1" fill="#a8a8a8"/><rect x="7" y="2" width="5" height="1" fill="#e4e4e4"/><rect x="13" y="2" width="1" height="1" fill="#a8a8a8"/><rect x="16" y="2" width="1" height="1" fill="#808080"/><rect x="7" y="3" width="1" height="1" fill="#e4e4e4"/><rect x="8" y="3" width="1" height="1" fill="#000"/><rect x="9" y="3" width="4" height="1" fill="#e4e4e4"/><rect x="13" y="3" width="2" height="1" fill="#a8a8a8"/><rect x="15" y="3" width="2" height="1" fill="#000"/><rect x="2" y="4" width="4" height="1" fill="#000"/><rect x="7" y="4" width="1" height="1" fill="#e4e4e4"/><rect x="8" y="4" width="1" height="1" fill="#000"/><rect x="9" y="4" width="2" height="1" fill="#0010f0"/><rect x="11" y="4" width="2" height="1" fill="#e4e4e4"/><rect x="13" y="4" width="2" height="1" fill="#a8a8a8"/><rect x="15" y="4" width="2" height="1" fill="#000"/><rect x="1" y="5" width="5" height="1" fill="#000"/><rect x="7" y="5" width="1" height="1" fill="#e4e4e4"/><rect x="8" y="5" width="1" height="1" fill="#000"/><rect x="9" y="5" width="1" height="1" fill="#00d8e8"/><rect x="10" y="5" width="2" height="1" fill="#0010f0"/><rect x="12" y="5" width="1" height="1" fill="#e4e4e4"/><rect x="13" y="5" width="2" height="1" fill="#a8a8a8"/><rect x="15" y="5" width="2" height="1" fill="#000"/><rect x="1" y="6" width="2" height="1" fill="#000"/><rect x="3" y="6" width="2" height="1" fill="#a8a8a8"/><rect x="5" y="6" width="1" height="1" fill="#000"/><rect x="7" y="6" width="1" height="1" fill="#e4e4e4"/><rect x="8" y="6" width="1" height="1" fill="#000"/><rect x="9" y="6" width="3" height="1" fill="#0010f0"/><rect x="12" y="6" width="1" height="1" fill="#e4e4e4"/><rect x="13" y="6" width="2" height="1" fill="#a8a8a8"/><rect x="15" y="6" width="2" height="1" fill="#000"/><rect x="1" y="7" width="2" height="1" fill="#000"/><rect x="3" y="7" width="2" height="1" fill="#a8a8a8"/><rect x="5" y="7" width="2" height="1" fill="#000"/><rect x="7" y="7" width="1" height="1" fill="#e4e4e4"/><rect x="8" y="7" width="1" height="1" fill="#000"/><rect x="9" y="7" width="3" height="1" fill="#0010f0"/><rect x="12" y="7" width="1" height="1" fill="#e4e4e4"/><rect x="13" y="7" width="2" height="1" fill="#a8a8a8"/><rect x="15" y="7" width="2" height="1" fill="#000"/><rect x="2" y="8" width="4" height="1" fill="#000"/><rect x="7" y="8" width="1" height="1" fill="#e4e4e4"/><rect x="8" y="8" width="1" height="1" fill="#000"/><rect x="9" y="8" width="1" height="1" fill="#e4e4e4"/><rect x="10" y="8" width="2" height="1" fill="#0010f0"/><rect x="12" y="8" width="1" height="1" fill="#e4e4e4"/><rect x="13" y="8" width="2" height="1" fill="#a8a8a8"/><rect x="15" y="8" width="2" height="1" fill="#000"/><rect x="2" y="9" width="3" height="1" fill="#000"/><rect x="7" y="9" width="2" height="1" fill="#e4e4e4"/><rect x="9" y="9" width="1" height="1" fill="#000"/><rect x="10" y="9" width="3" height="1" fill="#e4e4e4"/><rect x="13" y="9" width="2" height="1" fill="#a8a8a8"/><rect x="15" y="9" width="1" height="1" fill="#000"/><rect x="2" y="10" width="1" height="1" fill="#00d8e8"/><rect x="3" y="10" width="1" height="1" fill="#f00000"/><rect x="4" y="10" width="1" height="1" fill="#000"/><rect x="5" y="10" width="1" height="1" fill="#00d8e8"/><rect x="7" y="10" width="3" height="1" fill="#a8a8a8"/><rect x="11" y="10" width="1" height="1" fill="#000"/><rect x="15" y="10" width="1" height="1" fill="#000"/><rect x="1" y="11" width="2" height="1" fill="#f00000"/><rect x="3" y="11" width="1" height="1" fill="#000"/><rect x="4" y="11" width="2" height="1" fill="#f00000"/><rect x="6" y="11" width="1" height="1" fill="#000"/><rect x="8" y="11" width="3" height="1" fill="#a8a8a8"/><rect x="13" y="11" width="1" height="1" fill="#000"/><rect x="9" y="12" width="2" height="1" fill="#a8a8a8"/><rect x="11" y="12" width="2" height="1" fill="#000"/><rect x="11" y="13" width="2" height="1" fill="#000"/></svg>
<div class="t" style="left:29.5px;top:9px;font-size:12px;color:#999;font-weight:400;transform:scaleX(0.963)">ELSA Служба администратора</div>
<svg class="cbtn" style="left:890px;top:9px" viewBox="0 0 10 10"><path d="M0 5.5H10" stroke="#999" stroke-width="1"/></svg>
<svg class="cbtn" style="left:935px;top:9px" viewBox="0 0 10 10"><rect x=".5" y=".5" width="9" height="9" fill="none" stroke="#999" stroke-width="1"/></svg>
<svg class="cbtn" style="left:981px;top:9px" viewBox="0 0 10 10"><path d="M0 0L10 10M10 0L0 10" stroke="#999" stroke-width="1.1"/></svg>
<div class="t" style="left:7.5px;top:34px;font-size:12px;color:#777;font-weight:400;transform:scaleX(1.012)">Службы</div>
<div class="t" style="left:67.0px;top:34px;font-size:12px;color:#777;font-weight:400;transform:scaleX(0.987)">Правка</div>
<div class="t" style="left:121.0px;top:34px;font-size:12px;color:#777;font-weight:400;transform:scaleX(1.031)">Просмотр</div>
<div class="t" style="left:192.0px;top:34px;font-size:12px;color:#777;font-weight:400;transform:scaleX(0.996)">Обновление</div>
<div class="t" style="left:275.0px;top:34px;font-size:12px;color:#777;font-weight:400;transform:scaleX(1.012)">Дополнительные функции</div>
<div class="t" style="left:437.0px;top:34px;font-size:12px;color:#777;font-weight:400;">?</div>
<div class="abs" style="left:0px;top:50px;width:1009px;height:1px;background:#a0a0a0"></div>
<div class="abs" style="left:0px;top:51px;width:1009px;height:31px;background:#fff"></div>
<div class="abs" style="left:0px;top:51px;width:143px;height:32px;background:#f0f0f0"></div>
<div class="abs" style="left:143px;top:51px;width:1px;height:31px;background:#a0a0a0"></div>
<div class="tbtn" style="left:6px;top:55px"><svg class="abs" style="left:1px;top:1px" width="16" height="16" viewBox="0 0 16 16" shape-rendering="crispEdges"><rect x="1" y="1" width="1" height="1" fill="#ffee00"/><rect x="5" y="1" width="1" height="1" fill="#ffee00"/><rect x="6" y="1" width="2" height="1" fill="#000"/><rect x="9" y="1" width="4" height="1" fill="#000"/><rect x="2" y="2" width="1" height="1" fill="#ffee00"/><rect x="5" y="2" width="1" height="1" fill="#ffee00"/><rect x="8" y="2" width="1" height="1" fill="#ffee00"/><rect x="9" y="2" width="4" height="1" fill="#000"/><rect x="3" y="3" width="1" height="1" fill="#ffee00"/><rect x="5" y="3" width="1" height="1" fill="#ffee00"/><rect x="7" y="3" width="1" height="1" fill="#ffee00"/><rect x="9" y="3" width="2" height="1" fill="#fff"/><rect x="11" y="3" width="1" height="1" fill="#000"/><rect x="4" y="4" width="3" height="1" fill="#ffee00"/><rect x="7" y="4" width="5" height="1" fill="#fff"/><rect x="12" y="4" width="1" height="1" fill="#000"/><rect x="1" y="5" width="2" height="1" fill="#a0a0a0"/><rect x="5" y="5" width="2" height="1" fill="#ffee00"/><rect x="7" y="5" width="1" height="1" fill="#000"/><rect x="8" y="5" width="3" height="1" fill="#fff"/><rect x="11" y="5" width="1" height="1" fill="#0020ff"/><rect x="12" y="5" width="1" height="1" fill="#fff"/><rect x="13" y="5" width="1" height="1" fill="#000"/><rect x="4" y="6" width="3" height="1" fill="#ffee00"/><rect x="7" y="6" width="1" height="1" fill="#000"/><rect x="8" y="6" width="3" height="1" fill="#fff"/><rect x="11" y="6" width="1" height="1" fill="#0020ff"/><rect x="12" y="6" width="2" height="1" fill="#fff"/><rect x="14" y="6" width="1" height="1" fill="#000"/><rect x="1" y="7" width="1" height="1" fill="#a0a0a0"/><rect x="5" y="7" width="1" height="1" fill="#ffee00"/><rect x="6" y="7" width="2" height="1" fill="#000"/><rect x="8" y="7" width="6" height="1" fill="#fff"/><rect x="14" y="7" width="1" height="1" fill="#000"/><rect x="5" y="8" width="3" height="1" fill="#000"/><rect x="8" y="8" width="5" height="1" fill="#fff"/><rect x="13" y="8" width="1" height="1" fill="#000"/><rect x="6" y="9" width="2" height="1" fill="#000"/><rect x="8" y="9" width="4" height="1" fill="#fff"/><rect x="12" y="9" width="2" height="1" fill="#000"/><rect x="6" y="10" width="2" height="1" fill="#000"/><rect x="8" y="10" width="5" height="1" fill="#fff"/><rect x="13" y="10" width="1" height="1" fill="#000"/><rect x="6" y="11" width="2" height="1" fill="#000"/><rect x="8" y="11" width="1" height="1" fill="#fff"/><rect x="9" y="11" width="4" height="1" fill="#000"/><rect x="4" y="12" width="3" height="1" fill="#000"/><rect x="7" y="12" width="4" height="1" fill="#fff"/><rect x="11" y="12" width="1" height="1" fill="#000"/><rect x="3" y="13" width="2" height="1" fill="#000"/><rect x="5" y="13" width="2" height="1" fill="#f00000"/><rect x="7" y="13" width="1" height="1" fill="#000"/><rect x="8" y="13" width="2" height="1" fill="#fff"/><rect x="10" y="13" width="1" height="1" fill="#f00000"/><rect x="11" y="13" width="2" height="1" fill="#000"/><rect x="3" y="14" width="1" height="1" fill="#000"/><rect x="4" y="14" width="3" height="1" fill="#f00000"/><rect x="7" y="14" width="2" height="1" fill="#000"/><rect x="9" y="14" width="2" height="1" fill="#f00000"/><rect x="11" y="14" width="2" height="1" fill="#000"/><rect x="13" y="14" width="2" height="1" fill="#f00000"/><rect x="4" y="15" width="3" height="1" fill="#f00000"/><rect x="7" y="15" width="2" height="1" fill="#000"/><rect x="9" y="15" width="2" height="1" fill="#f00000"/><rect x="11" y="15" width="1" height="1" fill="#000"/><rect x="13" y="15" width="2" height="1" fill="#f00000"/></svg></div>
<div class="tbtn" style="left:29px;top:55px"><svg class="abs" style="left:2px;top:1px" width="16" height="16" viewBox="0 0 16 16" shape-rendering="crispEdges"><rect x="5" y="1" width="7" height="1" fill="#a0a0a0"/><rect x="4" y="2" width="8" height="1" fill="#a0a0a0"/><rect x="12" y="2" width="1" height="1" fill="#fff"/><rect x="14" y="2" width="1" height="1" fill="#a0a0a0"/><rect x="1" y="3" width="8" height="1" fill="#a0a0a0"/><rect x="9" y="3" width="2" height="1" fill="#fff"/><rect x="11" y="3" width="1" height="1" fill="#a0a0a0"/><rect x="12" y="3" width="1" height="1" fill="#fff"/><rect x="13" y="3" width="2" height="1" fill="#a0a0a0"/><rect x="1" y="4" width="7" height="1" fill="#a0a0a0"/><rect x="8" y="4" width="2" height="1" fill="#fff"/><rect x="10" y="4" width="3" height="1" fill="#a0a0a0"/><rect x="13" y="4" width="2" height="1" fill="#fff"/><rect x="2" y="5" width="6" height="1" fill="#a0a0a0"/><rect x="8" y="5" width="1" height="1" fill="#fff"/><rect x="9" y="5" width="3" height="1" fill="#a0a0a0"/><rect x="12" y="5" width="2" height="1" fill="#fff"/><rect x="2" y="6" width="9" height="1" fill="#a0a0a0"/><rect x="11" y="6" width="2" height="1" fill="#fff"/><rect x="13" y="6" width="1" height="1" fill="#a0a0a0"/><rect x="3" y="7" width="8" height="1" fill="#a0a0a0"/><rect x="11" y="7" width="1" height="1" fill="#fff"/><rect x="12" y="7" width="1" height="1" fill="#a0a0a0"/><rect x="13" y="7" width="1" height="1" fill="#fff"/><rect x="3" y="8" width="9" height="1" fill="#a0a0a0"/><rect x="12" y="8" width="2" height="1" fill="#fff"/><rect x="3" y="9" width="8" height="1" fill="#a0a0a0"/><rect x="11" y="9" width="1" height="1" fill="#fff"/><rect x="12" y="9" width="1" height="1" fill="#a0a0a0"/><rect x="13" y="9" width="1" height="1" fill="#fff"/><rect x="3" y="10" width="3" height="1" fill="#a0a0a0"/><rect x="6" y="10" width="1" height="1" fill="#fff"/><rect x="7" y="10" width="3" height="1" fill="#a0a0a0"/><rect x="10" y="10" width="2" height="1" fill="#fff"/><rect x="12" y="10" width="1" height="1" fill="#a0a0a0"/><rect x="13" y="10" width="1" height="1" fill="#fff"/><rect x="2" y="11" width="3" height="1" fill="#a0a0a0"/><rect x="5" y="11" width="2" height="1" fill="#fff"/><rect x="7" y="11" width="2" height="1" fill="#a0a0a0"/><rect x="9" y="11" width="2" height="1" fill="#fff"/><rect x="11" y="11" width="2" height="1" fill="#a0a0a0"/><rect x="2" y="12" width="2" height="1" fill="#a0a0a0"/><rect x="4" y="12" width="2" height="1" fill="#fff"/><rect x="6" y="12" width="3" height="1" fill="#a0a0a0"/><rect x="9" y="12" width="2" height="1" fill="#fff"/><rect x="11" y="12" width="2" height="1" fill="#a0a0a0"/><rect x="13" y="12" width="1" height="1" fill="#fff"/><rect x="2" y="13" width="1" height="1" fill="#a0a0a0"/><rect x="3" y="13" width="2" height="1" fill="#fff"/><rect x="5" y="13" width="8" height="1" fill="#a0a0a0"/><rect x="13" y="13" width="1" height="1" fill="#fff"/><rect x="2" y="14" width="11" height="1" fill="#a0a0a0"/><rect x="13" y="14" width="1" height="1" fill="#fff"/><rect x="3" y="15" width="11" height="1" fill="#fff"/></svg></div>
<div class="tbtn" style="left:60px;top:55px"><svg class="abs" style="left:1px;top:1px" width="17" height="17" viewBox="0 0 17 17">
<path d="M5.5 4.5H11.5L15.5 8V16.5H5.5Z" fill="#f0f0f0" stroke="#fff" stroke-width="1"/>
<path d="M4.5 3.5H10.5L14.5 7V15.5H4.5Z" fill="#f0f0f0" stroke="#a0a0a0" stroke-width="1"/>
<path d="M10.5 3.5V7H14.5" fill="none" stroke="#a0a0a0" stroke-width="1"/>
<path d="M6.5 9.5H12.5M6.5 11.5H12.5M6.5 13.5H12.5M6.5 7.5H9" stroke="#a0a0a0" stroke-width="1"/>
<path d="M1 1.5L5.5 6M3.5 1V6M1 3.5H6M5.5 1.5L1.5 5.5" stroke="#a0a0a0" stroke-width=".9"/>
<rect x="1" y="7" width="1" height="1" fill="#a0a0a0"/>
</svg></div>
<div class="tbtn" style="left:83px;top:55px"><svg class="abs" style="left:1px;top:1px" width="17" height="17" viewBox="0 0 17 17">
<path d="M3.5 4.5L15 16" stroke="#fff" stroke-width="1.2"/>
<path d="M2.5 3.5L9 10" stroke="#a0a0a0" stroke-width="2"/>
<path d="M8 9L14.5 15.5" stroke="#a0a0a0" stroke-width="1.1"/>
<path d="M15 3.5L10 8.5" stroke="#a0a0a0" stroke-width="1.1"/>
<path d="M10.5 8L3.8 14" stroke="#a0a0a0" stroke-width="2.2"/>
<rect x="15" y="16" width="1" height="1" fill="#a0a0a0"/>
</svg></div>
<div class="tbtn" style="left:114px;top:55px"><svg class="abs" style="left:1px;top:1px" width="16" height="16" viewBox="0 0 16 16">
<path d="M5.6 6.6V4.8Q5.6 2 9.4 2Q13.4 2 13.4 5.2Q13.4 7.2 11.2 8.4Q10.6 8.8 10.6 9.8V11H8V9.4Q8 7.8 9.8 6.8Q10.8 6.2 10.8 5.2Q10.8 4.2 9.6 4.2Q8.2 4.2 8.2 5.4V6.6Z" fill="#000"/>
<rect x="7.8" y="12.4" width="3.2" height="3.2" rx=".8" fill="#000"/>
<path d="M4.8 6.2V4.4Q4.8 1.6 8.8 1.6Q12.6 1.6 12.6 4.8Q12.6 6.8 10.4 8Q9.8 8.4 9.8 9.4V10.6H7.2V9Q7.2 7.4 9 6.4Q10 5.8 10 4.8Q10 3.8 8.8 3.8Q7.4 3.8 7.4 5V6.2Z" fill="#ffee00" stroke="#000" stroke-width="1.1" stroke-linejoin="round"/>
<rect x="7" y="12" width="3" height="3" rx=".8" fill="#ffee00" stroke="#000" stroke-width="1.1"/>
</svg></div>
<div class="abs" style="left:1px;top:82px;width:1007px;height:1px;background:#a0a0a0"></div><div class="abs" style="left:1px;top:83px;width:1007px;height:1px;background:#696969"></div><div class="abs" style="left:1px;top:83px;width:1px;height:156px;background:#696969"></div><div class="abs" style="left:2px;top:84px;width:1005px;height:155px;background:#fff"></div><div class="abs" style="left:2px;top:85px;width:1005px;height:17px;background:#f0f0f0;border-left:1px solid #fff"></div><div class="abs" style="left:2px;top:101px;width:1005px;height:1px;background:#a0a0a0"></div><div class="abs" style="left:2px;top:102px;width:1005px;height:1px;background:#696969"></div><div class="t" style="left:8.0px;top:87px;font-size:13px;color:#000;font-weight:400;transform:scaleX(0.912)">Имя пользователя</div><div class="hsep" style="left:163px;top:84px"></div><div class="t" style="left:173.0px;top:87px;font-size:13px;color:#000;font-weight:400;transform:scaleX(0.895)">Характеристика</div><div class="hsep" style="left:313px;top:84px"></div><div class="t" style="left:323.3px;top:87px;font-size:13px;color:#000;font-weight:400;transform:scaleX(0.888)">Язык</div><div class="hsep" style="left:403px;top:84px"></div><div class="t" style="left:413.0px;top:87px;font-size:13px;color:#000;font-weight:400;transform:scaleX(0.915)">Фамилия</div><div class="hsep" style="left:517px;top:84px"></div><div class="t" style="left:527.0px;top:87px;font-size:13px;color:#000;font-weight:400;transform:scaleX(0.928)">Имя</div><div class="hsep" style="left:604px;top:84px"></div>
<div class="abs" style="left:1px;top:239px;width:1007px;height:1px;background:#fff"></div>
<div class="abs" style="left:1px;top:244px;width:1007px;height:1px;background:#a0a0a0"></div><div class="abs" style="left:1px;top:245px;width:1007px;height:1px;background:#696969"></div><div class="abs" style="left:1px;top:245px;width:1px;height:156px;background:#696969"></div><div class="abs" style="left:2px;top:246px;width:1005px;height:155px;background:#fff"></div><div class="abs" style="left:2px;top:247px;width:1005px;height:17px;background:#f0f0f0;border-left:1px solid #fff"></div><div class="abs" style="left:2px;top:263px;width:1005px;height:1px;background:#a0a0a0"></div><div class="abs" style="left:2px;top:264px;width:1005px;height:1px;background:#696969"></div><div class="t" style="left:7.8px;top:249px;font-size:13px;color:#000;font-weight:400;transform:scaleX(0.893)">Учётная запись</div><div class="hsep" style="left:145px;top:246px"></div><div class="t" style="left:155.0px;top:249px;font-size:13px;color:#000;font-weight:400;transform:scaleX(0.911)">имя пользователя</div><div class="hsep" style="left:308px;top:246px"></div><div class="t" style="left:318.0px;top:249px;font-size:13px;color:#000;font-weight:400;transform:scaleX(0.989)">имя</div><div class="hsep" style="left:742px;top:246px"></div><div class="t" style="left:680.5px;top:249px;font-size:13px;color:#000;font-weight:400;">с</div>
<div class="abs" style="left:1px;top:401px;width:1007px;height:1px;background:#fff"></div>
<div class="abs" style="left:1px;top:406px;width:1007px;height:1px;background:#a0a0a0"></div>
<div class="abs" style="left:1px;top:407px;width:1007px;height:1px;background:#696969"></div>
<div class="abs" style="left:1px;top:407px;width:1px;height:88px;background:#696969"></div>
<div class="abs" style="left:2px;top:408px;width:989px;height:53px;background:#f0f0f0;border-right:1px solid #fff;border-bottom:1px solid #fff"></div>
<svg class="abs" style="left:994px;top:414px" width="9" height="6" viewBox="0 0 9 6"><path d="M1 5L4.5 1.5L8 5" fill="none" stroke="#bdbdbd" stroke-width="1.8"/></svg>
<svg class="abs" style="left:994px;top:450px" width="9" height="6" viewBox="0 0 9 6"><path d="M1 1L4.5 4.5L8 1" fill="none" stroke="#bdbdbd" stroke-width="1.8"/></svg>
<svg class="abs" style="left:7px;top:465px" width="6" height="9" viewBox="0 0 6 9"><path d="M5 1L1.5 4.5L5 8" fill="none" stroke="#d2d2d2" stroke-width="1.8"/></svg>
<svg class="abs" style="left:979px;top:465px" width="6" height="9" viewBox="0 0 6 9"><path d="M1 1L4.5 4.5L1 8" fill="none" stroke="#bdbdbd" stroke-width="1.8"/></svg>
<div class="abs" style="left:2px;top:478px;width:34px;height:1px;background:#f0f0f0"></div>
<div class="abs" style="left:36px;top:478px;width:149px;height:1px;background:#fff"></div>
<div class="abs" style="left:184px;top:478px;width:823px;height:1px;background:#000"></div>
<div class="abs" style="left:2px;top:479px;width:1005px;height:15px;background:#c6c6c6"></div>
<div class="abs" style="left:2px;top:494px;width:1005px;height:1px;background:#fff"></div>
<div class="abs" style="left:2px;top:479px;width:17px;height:15px;background:#f0f0f0;border:1px solid;border-color:#fff #808080 #808080 #fff;box-shadow:inset -1px -1px 0 #a0a0a0"><svg width="15" height="13" viewBox="0 0 16 15" style="display:block"><path d="M11 2.2L4.6 7.5L11 12.8Z" fill="#606060"/></svg></div>
<div class="abs" style="left:19px;top:479px;width:17px;height:15px;background:#f0f0f0;border:1px solid;border-color:#fff #808080 #808080 #fff;box-shadow:inset -1px -1px 0 #a0a0a0"><svg width="15" height="13" viewBox="0 0 16 15" style="display:block"><path d="M5.6 2.2L12 7.5L5.6 12.8Z" fill="#606060"/></svg></div>
<svg class="abs" style="left:36px;top:478px" width="150" height="16" viewBox="0 0 150 16"><path d="M0 0 L8 15.5 L141 15.5 L149 0 Z" fill="#fff"/><path d="M0.5 0.5 L8 15 " stroke="#000" stroke-width="1.3" fill="none"/><path d="M141 15 L148.5 0.5" stroke="#000" stroke-width="1.3" fill="none"/><path d="M8 15.5H141" stroke="#808080" stroke-width="1"/></svg>
<div class="t" style="left:46.0px;top:480px;font-size:12.5px;color:#000;font-weight:700;transform:scaleX(0.950)">Управление заказами</div>
<svg class="abs" style="left:996px;top:503px" width="12" height="12" viewBox="0 0 12 12"><path d="M1.5 12L12 1.5M5.5 12L12 5.5M9.5 12L12 9.5" stroke="#8c8c8c" stroke-width="1.5"/></svg>
</div>
<div id="dlg">
<div class="abs" style="left:0px;top:0px;width:341px;height:25px;background:#fff"></div>
<div class="t" style="left:2.8px;top:6px;font-size:12px;color:#000;font-weight:400;transform:scaleX(0.992)">ELSA Administrationsdienst- Зарегистрировать</div>
<svg class="cbtn" style="left:321px;top:7px" viewBox="0 0 10 10"><path d="M0 0L10 10M10 0L0 10" stroke="#000" stroke-width="1.1"/></svg>
<div class="t" style="left:12.0px;top:38px;font-size:12px;color:#000;font-weight:400;transform:scaleX(0.922)">Данная программа защищена паролем.</div>
<div class="t" style="left:12.0px;top:51px;font-size:12px;color:#000;font-weight:400;transform:scaleX(0.908)">Введите Ваше имя пользователя и Ваш</div>
<div class="t" style="left:12.0px;top:63px;font-size:12px;color:#000;font-weight:400;transform:scaleX(0.898)">пароль, чтобы продолжить.</div>
<div class="t" style="left:11.5px;top:91px;font-size:12px;color:#000;font-weight:400;transform:scaleX(0.924)">Имя пользователя:</div>
<div class="t" style="left:11.5px;top:140px;font-size:12px;color:#000;font-weight:400;transform:scaleX(0.889)">Пароль:</div>
<div class="abs" style="left:11px;top:106px;width:230px;height:21px;background:#fff;border:1px solid;border-color:#a0a0a0 #fff #fff #a0a0a0;box-shadow:inset 1px 1px 0 #696969, inset -1px -1px 0 #e3e3e3"></div>
<div class="abs" style="left:11px;top:155px;width:230px;height:21px;background:#fff;border:1px solid;border-color:#a0a0a0 #fff #fff #a0a0a0;box-shadow:inset 1px 1px 0 #696969, inset -1px -1px 0 #e3e3e3"></div>
<div class="abs" style="left:254px;top:36px;width:77px;height:23px;background:#f0f0f0;border:1px solid #696969;box-shadow:inset 1px 1px 0 #fff, inset -1px -1px 0 #696969, inset -2px -2px 0 #a0a0a0"></div>
<div class="abs" style="left:254px;top:64px;width:77px;height:23px;background:#f0f0f0;border:1px solid;border-color:#fff #696969 #696969 #fff;box-shadow:inset -1px -1px 0 #a0a0a0"></div>
<div class="t" style="left:285.8px;top:41px;font-size:12px;color:#000;font-weight:400;transform:scaleX(0.992)">Да</div>
<div class="t" style="left:268.6px;top:69px;font-size:12px;color:#000;font-weight:400;transform:scaleX(0.912)">Прервать</div>
</div>
<div id="tb">
<svg class="abs" style="left:16px;top:12px" width="16" height="16" viewBox="0 0 16 16"><path d="M0 2.3L6.6 1.4V7.6H0ZM7.4 1.3L16 0V7.6H7.4ZM0 8.4H6.6V14.6L0 13.7ZM7.4 8.4H16V16L7.4 14.7Z" fill="#fff"/></svg>
<svg class="abs" style="left:62px;top:13px" width="20" height="14" viewBox="0 0 20 14"><rect x="4.5" y=".75" width="11" height="12.5" fill="none" stroke="#fff" stroke-width="1.3"/><path d="M3 2.5H.7V11.5H3M17 2.5H19.3V11.5H17" fill="none" stroke="#fff" stroke-width="1.2"/></svg>
<div class="abs" style="left:96px;top:1px;width:342px;height:39px;background:#dedede"></div>
<div class="t" style="left:110.3px;top:12px;font-size:15.5px;color:#2a2a2a;font-weight:400;transform:scaleX(0.998)">Поиск в Яндексе и на компьютере</div>
<svg class="abs" style="left:405px;top:8px" width="18" height="24" viewBox="0 0 18 24"><rect x="5.2" y="1" width="7.6" height="13.5" rx="3.8" fill="#111"/><path d="M1.8 10.5Q1.8 17.5 9 17.5Q16.2 17.5 16.2 10.5" fill="none" stroke="#111" stroke-width="1.8"/><path d="M9 17.5V23" stroke="#111" stroke-width="1.8"/></svg>
<div class="abs" style="left:451px;top:38px;width:40px;height:2px;background:#76b9ed"></div>
<div class="abs" style="left:598px;top:38px;width:40px;height:2px;background:#76b9ed"></div>
<div class="abs" style="left:843px;top:38px;width:40px;height:2px;background:#76b9ed"></div>
<div class="abs" style="left:888px;top:0px;width:48px;height:40px;background:linear-gradient(90deg,#2f3134,#3a3c40 60%,#2f3236)"></div>
<div class="abs" style="left:888px;top:38px;width:48px;height:2px;background:#76b9ed"></div>
<svg class="abs" style="left:459px;top:10px" width="24" height="21" viewBox="0 0 24 21"><path d="M1.5 2.2Q1.5 1.2 2.5 1.2H8.5L10 2.8H21.5Q22.5 2.8 22.5 3.8V6H1.5Z" fill="#e3b33e"/><rect x="1.5" y="4.2" width="21" height="15" rx=".8" fill="#f8db7d"/><path d="M1.5 5.2H22.5" stroke="#fbe9a6" stroke-width="1.2"/><path d="M4.8 19.2V12.8Q4.8 11.8 5.8 11.8H18.2Q19.2 11.8 19.2 12.8V19.2H15V15.6H9V19.2Z" fill="#35a9e8"/><path d="M4.8 12.8Q4.8 11.8 5.8 11.8H18.2Q19.2 11.8 19.2 12.8V13.8H4.8Z" fill="#6fc8f3"/></svg>
<svg class="abs" style="left:508px;top:7px" width="24" height="25" viewBox="0 0 24 25"><path d="M8.2 7V5.2Q8.2 1.5 12 1.5Q15.8 1.5 15.8 5.2V7" fill="none" stroke="#fff" stroke-width="1.5"/><path d="M1 6.8H23V22.5Q23 24 21.5 24H2.5Q1 24 1 22.5Z" fill="#fff"/><rect x="6.6" y="10.4" width="4.9" height="4.9" fill="#f25022"/><rect x="12.5" y="10.4" width="4.9" height="4.9" fill="#7fba00"/><rect x="6.6" y="16.3" width="4.9" height="4.9" fill="#00a4ef"/><rect x="12.5" y="16.3" width="4.9" height="4.9" fill="#ffb900"/></svg>
<svg class="abs" style="left:557px;top:10px" width="23" height="21" viewBox="0 0 23 21"><path d="M1.5 2.5L18.5 0.8V20L1.5 18.2Z" fill="#5aa6d8"/><path d="M18.5 0.8L21.5 2.2V18.6L18.5 20Z" fill="#2f6fa3"/><path d="M3 4L17 2.6V18L3 16.8Z" fill="#8cc6ea"/><circle cx="10.2" cy="10.3" r="6.2" fill="#f58220"/><circle cx="10.2" cy="10.3" r="5" fill="#f79a3e"/><path d="M8 6.8L14 10.3L8 13.8Z" fill="#fff"/></svg>
<svg class="abs" style="left:606px;top:7px" width="24" height="24" viewBox="0 0 24 24"><defs><radialGradient id="yg" cx=".5" cy=".35" r=".7"><stop offset="0" stop-color="#fff"/><stop offset=".8" stop-color="#ededed"/><stop offset="1" stop-color="#cfcfcf"/></radialGradient></defs><circle cx="12" cy="12.8" r="11.2" fill="url(#yg)"/><path d="M6.4 7L12 13.6L17.6 7" fill="none" stroke="#e0161e" stroke-width="2.6" stroke-linejoin="miter"/><path d="M12 12.8V21" stroke="#e0161e" stroke-width="2.6"/></svg>
<svg class="abs" style="left:655px;top:9px" width="26" height="22" viewBox="0 0 26 22"><circle cx="9.2" cy="6.3" r="3.7" fill="#6aa84a"/><path d="M3 19Q3 10.5 9.2 10.5Q15 10.5 15.3 19Z" fill="#5c9a3e"/><circle cx="16.8" cy="5" r="4.2" fill="#5d9bd6"/><path d="M10.5 20Q10.5 9.8 16.8 9.8Q23.2 9.8 23.5 20Z" fill="#4a86c5"/><path d="M0.5 14.5Q5 9 11 13.5Q16 17.2 25 10.5Q20 20 11.5 16.8Q5.5 13.8 0.5 14.5Z" fill="#f2b23a"/><path d="M2 19.5Q8 15.5 14 19Q19 21 24 16" fill="none" stroke="#d99422" stroke-width="1.3"/></svg>
<svg class="abs" style="left:703px;top:9px" width="26" height="21" viewBox="0 0 26 21"><path d="M1 7.6L13 1L25 7.6V20H1Z" fill="#fff"/><path d="M2.3 8H23.8L15.1 12.6L19.8 16.6Z" fill="#020208"/></svg>
<svg class="abs" style="left:753px;top:8px" width="24" height="23" viewBox="0 0 24 23"><defs><linearGradient id="og" x1="0" y1="0" x2="1" y2="1"><stop offset="0" stop-color="#e8202c"/><stop offset=".5" stop-color="#d01422"/><stop offset="1" stop-color="#f04048"/></linearGradient></defs><ellipse cx="12" cy="11.5" rx="11.4" ry="11.2" fill="url(#og)"/><ellipse cx="12" cy="11.4" rx="5.9" ry="8" fill="#020208"/></svg>
<svg class="abs" style="left:803px;top:9px" width="22" height="22" viewBox="0 0 22 22"><path d="M1 10.2Q2 1 11.5 1Q21 1 21 11V13.2H7.6Q7.9 17.6 13 17.6Q16.8 17.6 19.8 15.8V20Q16.6 21.6 12.4 21.6Q3 21.6 3 13Q3 8.6 6.8 6.4Q3.2 7 1 10.2ZM7.7 9.4H15.2Q15.2 5.4 11.4 5.4Q8.3 5.4 7.7 9.4Z" fill="#1478d4"/></svg>
<svg class="abs" style="left:850.6px;top:7.7999999999999545px" width="24" height="24" viewBox="0 0 50 50"><defs><radialGradient id="ug" cx=".45" cy=".3" r=".75"><stop offset="0" stop-color="#88c862"/><stop offset=".6" stop-color="#6fb747"/><stop offset="1" stop-color="#5ea238"/></radialGradient><clipPath id="ugc"><circle cx="25" cy="24.8" r="24"/></clipPath></defs><circle cx="25" cy="24.8" r="24" fill="url(#ug)"/><path clip-path="url(#ugc)" d="M6.9 16.1L15.3 14.6L19.6 27Q22 32.5 28.1 31.7Q34 30.8 35.4 27.4Q36 25 34.5 21L29.6 12L36.8 10.6L42.7 25.2Q44.5 29 50 29.2L49 33.8Q42 34.5 38.5 31.8Q36 37.5 29 38.5Q26.5 38.8 24.6 38L28.2 50L18.5 50Z" fill="#f4f4f4"/></svg>
<svg class="abs" style="left:899px;top:10px" width="26" height="21" viewBox="0 0 26 21"><path d="M9.5 3L13.8 1.1L24.7 4L19.7 6.5Z" fill="#d6d6d6"/><path d="M19.7 6.5L24.7 4L25.1 11.9L19.3 16.5Z" fill="#a4a4a4"/><path d="M22.2 5.3L23 4.9L23.2 13.4L22.4 14Z" fill="#111"/><path d="M24.2 4.4L24.9 4.1L25.1 11.9L24.4 12.5Z" fill="#111"/><path d="M9.5 3L19.7 6.5L19.3 16.5L9.9 12.3Z" fill="#ececec"/><path d="M11.3 5L17.2 7.3L17 13.6L11.8 11.5Z" fill="#0808f0"/><path d="M12.8 7L14 7.5V9.4L12.8 8.9Z" fill="#28a8ff"/><path d="M10.1 13.6L18 17.8L20.1 19L17.2 20.2L11.3 17.3Z" fill="#dcdcdc"/><path d="M10.1 13.6L11.3 17.3L17.2 20.2" fill="none" stroke="#111" stroke-width=".8"/><path d="M18.4 17.2L20.6 18.4L19.6 19.4Z" fill="#111"/><circle cx="5.2" cy="9.6" r="3.7" fill="#080808"/><path d="M2.6 15.8Q2.8 11.8 5.6 12Q9 12 9.4 16Z" fill="#101010"/><circle cx="7" cy="10.8" r="1.9" fill="#9a9aa8"/><path d="M5.8 12.4L8.6 12V15.4L6.4 15.6Z" fill="#b8b8b8"/><path d="M2 16.2H10.4V17.8H2Z" fill="#e00010"/><rect x="6.6" y="15.2" width="1.4" height="1.2" fill="#109090"/></svg>
<svg class="abs" style="left:1059px;top:11px" width="17" height="17" viewBox="0 0 17 17"><g fill="none" stroke="#fff" stroke-width="1.15"><circle cx="11" cy="4" r="2.4"/><path d="M8.4 8.2Q9.4 6.8 11 6.8Q14.9 6.8 15 10.4"/><circle cx="4.9" cy="10.3" r="2.3"/><path d="M1 16Q1 13 4.9 13Q8.9 13 8.9 16"/></g></svg>
<svg class="abs" style="left:1096px;top:16px" width="14" height="8" viewBox="0 0 14 8"><path d="M1 7L7 1.2L13 7" fill="none" stroke="#fff" stroke-width="1.4"/></svg>
<svg class="abs" style="left:1121px;top:12px" width="12" height="16" viewBox="0 0 12 16"><rect x="0" y="0" width="12" height="16" rx="5.5" fill="#1e8bf0"/><path d="M3.2 5L8.6 10.6L6 13V3L8.6 5.4L3.2 11" fill="none" stroke="#fff" stroke-width="1.1"/></svg>
<svg class="abs" style="left:1142px;top:14px" width="18" height="11" viewBox="0 0 18 11"><rect x="5.6" y="2.6" width="10.6" height="7.4" fill="none" stroke="#fff" stroke-width="1.2"/><rect x="16.6" y="4.6" width="1.4" height="3.4" fill="#fff"/><rect x="7" y="4" width="7.8" height="4.6" fill="#fff"/><path d="M2 0V3M4.4 0V3" stroke="#fff" stroke-width="1"/><path d="M0.8 3H5.6V5.4Q5.6 7.4 3.2 7.4Q0.8 7.4 0.8 5.4Z" fill="#fff"/><path d="M3.2 7.4V9.4H6" fill="none" stroke="#fff" stroke-width="1"/></svg>
<svg class="abs" style="left:1169px;top:14px" width="15" height="14" viewBox="0 0 15 14"><path d="M1 13Q1 1.2 13.6 1.2" fill="none" stroke="#fff" stroke-width="1.2"/><path d="M4.4 13Q4.4 4.6 13.6 4.6" fill="none" stroke="#fff" stroke-width="1.2"/><path d="M7.8 13Q7.8 8 13.6 8" fill="none" stroke="#fff" stroke-width="1.2"/><circle cx="12.2" cy="11.6" r="1.7" fill="#fff"/></svg>
<svg class="abs" style="left:1190px;top:13px" width="18" height="14" viewBox="0 0 18 14"><path d="M1 4.6H3.8L7.4 1.2V12.8L3.8 9.4H1Z" fill="none" stroke="#fff" stroke-width="1.1"/><path d="M9.6 4.6Q11 7 9.6 9.4M11.8 2.8Q14.2 7 11.8 11.2M14.2 1Q17.6 7 14.2 13" fill="none" stroke="#fff" stroke-width="1.1"/></svg>
<div class="t" style="left:1217.8px;top:14px;font-size:12px;color:#fff;font-weight:400;transform:scaleX(0.826)">ENG</div>
<div class="t" style="left:1266.3px;top:5px;font-size:12px;color:#fff;font-weight:400;transform:scaleX(0.872)">22:36</div>
<div class="t" style="left:1253.1px;top:22px;font-size:12px;color:#fff;font-weight:400;transform:scaleX(0.891)">06.01.2018</div>
<svg class="abs" style="left:1325px;top:12px" width="17" height="15" viewBox="0 0 17 15"><path d="M0.5 0.5H16.5V11.5H6.5L3.5 14.5V11.5H0.5Z" fill="#fff"/><path d="M3 3.5H14M3 6H14M3 8.5H14" stroke="#0a0a12" stroke-width="1"/></svg>
<svg class="abs" style="left:1332px;top:19px" width="17" height="17" viewBox="0 0 17 17"><circle cx="8.5" cy="8.5" r="7.8" fill="#3c3c3c" stroke="#0a0a12" stroke-width="1.2"/><text x="8.5" y="12.6" font-family="Liberation Sans" font-weight="700" font-size="11.5" fill="#fff" text-anchor="middle">1</text></svg>
<div class="abs" style="left:1361px;top:0px;width:1px;height:40px;background:#5a5a5a"></div>
</div>
</body>
</html>
